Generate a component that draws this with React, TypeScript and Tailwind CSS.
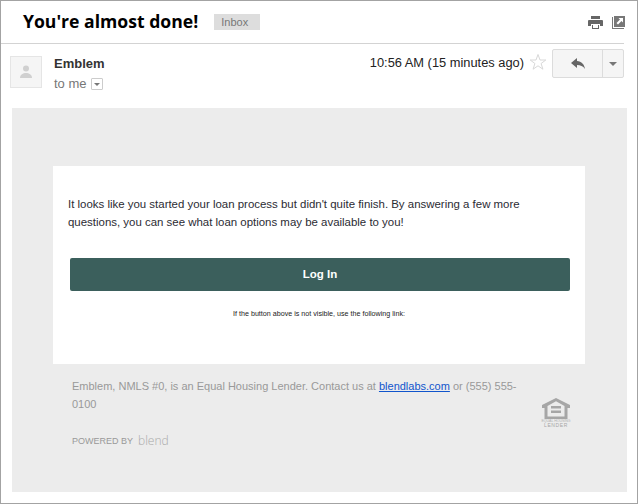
function PrintIcon() {
    return (
        <svg width="15" height="13" viewBox="0 0 15 13">
            <path d="M3 0h9v3H3z" fill="#666" />
            <path d="M1 4h13a1 1 0 0 1 1 1v5h-3V8H3v2H0V5a1 1 0 0 1 1-1z" fill="#666" />
            <path d="M4 9h7v4H4z" fill="#666" />
            <path d="M5 9h5v3H5z" fill="#fff" />
        </svg>
    )
}

function PopOutIcon() {
    return (
        <svg width="13" height="13" viewBox="0 0 13 13">
            <path d="M0 1h1v11h11v1H0z" fill="#777" />
            <path d="M2 0h11v11H2z" fill="#777" />
            <path d="M6.500 2H11v4.500L9.500 5 6 8.500 4.500 7 8 3.500z" fill="#fff" />
        </svg>
    )
}

function EqualHousing() {
    return (
        <div className="flex flex-col items-center w-[28px]">
            <svg width="28" height="21" viewBox="0 0 28 21">
                <path d="M14 0 0 7v3h2.500v11h23V10H28V7z" fill="#a6a6a6" />
                <path d="M14 3.200 5.500 8v10.500h17V8z" fill="#ececec" />
                <path d="M9 8h10v2.500H9zM9 12.500h10V15H9z" fill="#a6a6a6" />
            </svg>
            <span className="text-[3.500px] leading-[4px] text-[#b0b0b0] whitespace-nowrap">EQUAL HOUSING</span>
            <span className="text-[5px] leading-[5px] tracking-[0.6px] text-[#a6a6a6]">LENDER</span>
        </div>
    )
}

export default function App() {
    return (
        <div className="w-[638px] h-[504px] bg-white border border-[#a3a3a3] font-['Liberation_Sans',sans-serif] overflow-hidden">
            <div className="h-[43px] mr-[13px] border-b border-[#d3d3d3] flex items-center pl-[22px]">
                <h1 className="font-['Open_Sans',sans-serif] font-bold text-[17.600px] text-black leading-none">You're almost done!</h1>
                <span className="ml-4 w-[46px] h-[16px] bg-[#dddddd] text-[#777] text-[11px] leading-[16px] pl-[7px]">Inbox</span>
                <div className="ml-auto flex items-center gap-[9px] -mr-[1px]">
                    <PrintIcon />
                    <PopOutIcon />
                </div>
            </div>

            <div className="flex h-[64px] pl-[9px] pr-[13px]">
                <div className="w-[32px] h-[32px] mt-[12px] bg-[#f5f5f5] border border-[#e5e5e5] flex items-center justify-center">
                    <svg width="14" height="14" viewBox="0 0 14 14">
                        <circle cx="7" cy="3.500" r="3" fill="#d0d0d0" />
                        <path d="M1 13c0-3.500 3-5 6-5s6 1.500 6 5z" fill="#d0d0d0" />
                    </svg>
                </div>
                <div className="ml-[12px] pt-[12px]">
                    <p className="text-[13px] leading-[16px] font-bold text-[#333]">Emblem</p>
                    <div className="flex items-center gap-[4px] mt-[4px]">
                        <span className="text-[13px] leading-[16px] text-[#777]">to me</span>
                        <span className="w-[12px] h-[12px] border border-[#ccc] rounded-[1px] flex items-center justify-center">
                            <span className="w-0 h-0 border-x-[3px] border-x-transparent border-t-[3px] border-t-[#777]" />
                        </span>
                    </div>
                </div>
                <div className="ml-auto flex items-start pt-[5px]">
                    <span className="text-[12.850px] leading-[16px] mt-[6px] text-[#222]">10:56 AM (15 minutes ago)</span>
                    <svg width="18" height="18" viewBox="0 0 18 18" className="ml-[5px] mt-[4px]">
                        <path d="M9 1.500 11 7h5.800l-4.700 3.500 1.800 5.700L9 12.800l-4.900 3.400 1.800-5.700L1.200 7H7z" fill="none" stroke="#d8d8d8" />
                    </svg>
                    <div className="ml-[5px] w-[72px] h-[29px] bg-[#f5f5f5] border border-[#dcdcdc] rounded-[2px] flex">
                        <div className="w-[49px] flex items-center justify-center">
                            <svg width="14" height="12" viewBox="0 0 14 12">
                                <path d="M6 0 0 5l6 5V7c3.500 0 6 1 8 4-.5-4.500-3.500-7.500-8-8z" fill="#666" />
                            </svg>
                        </div>
                        <div className="flex-1 border-l border-[#dcdcdc] flex items-center justify-center">
                            <span className="w-0 h-0 border-x-[4px] border-x-transparent border-t-[4px] border-t-[#777]" />
                        </div>
                    </div>
                </div>
            </div>

            <div className="ml-[11px] w-[615px] h-[384px] bg-[#ececec] pt-[58px] px-[41px]">
                <div className="w-[532px] h-[198px] bg-white pt-[29px] px-[15px]">
                    <p className="text-[11.450px] leading-[18px] text-[#2b2b33]">
                        It looks like you started your loan process but didn't quite finish. By answering a few more<br />
                        questions, you can see what loan options may be available to you!
                    </p>
                    <button className="block w-[500px] h-[33px] ml-[2px] mt-[27px] bg-[#3b5f5c] rounded-[2px] text-white font-bold text-[11.500px]">Log In</button>
                    <p className="mt-[19px] text-center text-[7.150px] leading-[8px] text-[#222]">If the button above is not visible, use the following link:</p>
                </div>
                <div className="pl-[19px] pr-[16px] pt-[13px] flex justify-between">
                    <div>
                        <p className="text-[11px] leading-[18px] text-[#999] w-[450px]">
                            Emblem, NMLS #0, is an Equal Housing Lender. Contact us at <a className="text-[#1155cc] underline">blendlabs.com</a> or (555) 555-<br />
                            0100
                        </p>
                        <div className="flex items-center mt-[21px]">
                            <span className="text-[9px] leading-[14px] text-[#999]">POWERED BY</span>
                            <span className="ml-[5px] font-['Open_Sans',sans-serif] font-light text-[12px] leading-[14px] text-[#aaa]">blend</span>
                        </div>
                    </div>
                    <div className="pt-[21px]">
                        <EqualHousing />
                    </div>
                </div>
            </div>
        </div>
    )
}
